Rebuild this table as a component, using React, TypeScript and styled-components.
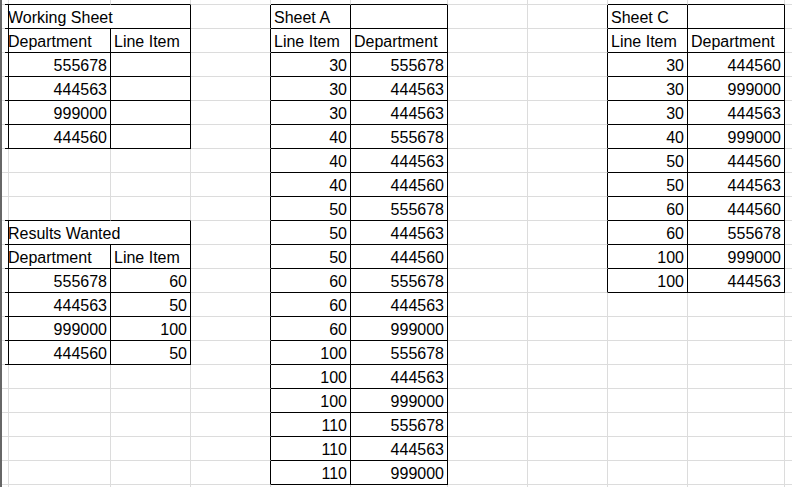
import styled, { createGlobalStyle } from "styled-components";

type CellData = { text: string; align?: "left" | "right"; span?: number };
type Block = { top: number; left: number; bottom: number; right: number };

const GRID = "#dcdcdc";
const INK = "#000000";

// column widths include the 1px right gridline
const COLUMNS = [3, 106, 80, 80, 80, 97, 80, 80, 80, 97, 80];
const ROWS = 22;

const GlobalStyle = createGlobalStyle`
  html, body {
    margin: 0;
    padding: 0;
    background: #ffffff;
    overflow: hidden;
  }
  body {
    font-family: "Liberation Sans", Arial, sans-serif;
  }
`;

const tables: Block[] = [
  { top: 1, left: 1, bottom: 6, right: 2 },
  { top: 10, left: 1, bottom: 15, right: 2 },
  { top: 1, left: 4, bottom: 20, right: 5 },
  { top: 1, left: 8, bottom: 12, right: 9 },
];

const cells = new Map<string, CellData>();
const put = (r: number, c: number, text: string, align: "left" | "right" = "left", span = 1) =>
  cells.set(`${r},${c}`, { text, align, span });

// working sheet
put(1, 1, "Working Sheet", "left", 2);
put(2, 1, "Department");
put(2, 2, "Line Item");
["555678", "444563", "999000", "444560"].forEach((d, i) => put(3 + i, 1, d, "right"));

// results wanted
put(10, 1, "Results Wanted", "left", 2);
put(11, 1, "Department");
put(11, 2, "Line Item");
[
  ["555678", "60"],
  ["444563", "50"],
  ["999000", "100"],
  ["444560", "50"],
].forEach(([d, l], i) => {
  put(12 + i, 1, d, "right");
  put(12 + i, 2, l, "right");
});

// sheet A
put(1, 4, "Sheet A");
put(2, 4, "Line Item");
put(2, 5, "Department");
[
  ["30", "555678"],
  ["30", "444563"],
  ["30", "444563"],
  ["40", "555678"],
  ["40", "444563"],
  ["40", "444560"],
  ["50", "555678"],
  ["50", "444563"],
  ["50", "444560"],
  ["60", "555678"],
  ["60", "444563"],
  ["60", "999000"],
  ["100", "555678"],
  ["100", "444563"],
  ["100", "999000"],
  ["110", "555678"],
  ["110", "444563"],
  ["110", "999000"],
].forEach(([l, d], i) => {
  put(3 + i, 4, l, "right");
  put(3 + i, 5, d, "right");
});

// sheet C
put(1, 8, "Sheet C");
put(2, 8, "Line Item");
put(2, 9, "Department");
[
  ["30", "444560"],
  ["30", "999000"],
  ["30", "444563"],
  ["40", "999000"],
  ["50", "444560"],
  ["50", "444563"],
  ["60", "444560"],
  ["60", "555678"],
  ["100", "999000"],
  ["100", "444563"],
].forEach(([l, d], i) => {
  put(3 + i, 8, l, "right");
  put(3 + i, 9, d, "right");
});

const inTable = (r: number, c: number) =>
  tables.some((t) => r >= t.top && r <= t.bottom && c >= t.left && c <= t.right);

export default function App() {
  const out: JSX.Element[] = [];
  for (let r = 0; r < ROWS; r++) {
    for (let c = 0; c < COLUMNS.length; c++) {
      const data = cells.get(`${r},${c}`);
      const span = data?.span ?? 1;
      const last = c + span - 1;
      const right = inTable(r, last) || inTable(r, last + 1) ? INK : GRID;
      const bottom = inTable(r, c) || inTable(r + 1, c) ? INK : GRID;
      out.push(
        <Cell key={`${r}-${c}`} $right={right} $bottom={bottom} $align={data?.align ?? "left"} $span={span}>
          {data?.text}
        </Cell>
      );
      c = last;
    }
  }

  return (
    <>
      <GlobalStyle />
      <Sheet>{out}</Sheet>
    </>
  );
}

const Sheet = styled.div`
  width: 792px;
  height: 487px;
  overflow: hidden;

  display: grid;
  grid-template-columns: ${COLUMNS.map((w) => `${w}px`).join(" ")};
  grid-template-rows: 5px repeat(${ROWS - 1}, 24px);

  border-left: 2px solid #666666;
  box-sizing: border-box;
`;

const Cell = styled.div<{ $right: string; $bottom: string; $align: "left" | "right"; $span: number }>`
  grid-column: span ${(p) => p.$span};
  box-sizing: border-box;
  min-width: 0;
  padding: 0 3px 1px 3px;

  display: flex;
  align-items: flex-end;
  justify-content: ${(p) => (p.$align === "right" ? "flex-end" : "flex-start")};

  border-right: 1px solid ${(p) => p.$right};
  border-bottom: 1px solid ${(p) => p.$bottom};

  font-size: 16px;
  line-height: 18px;
  color: #000000;
  white-space: nowrap;
  overflow: hidden;
`;
